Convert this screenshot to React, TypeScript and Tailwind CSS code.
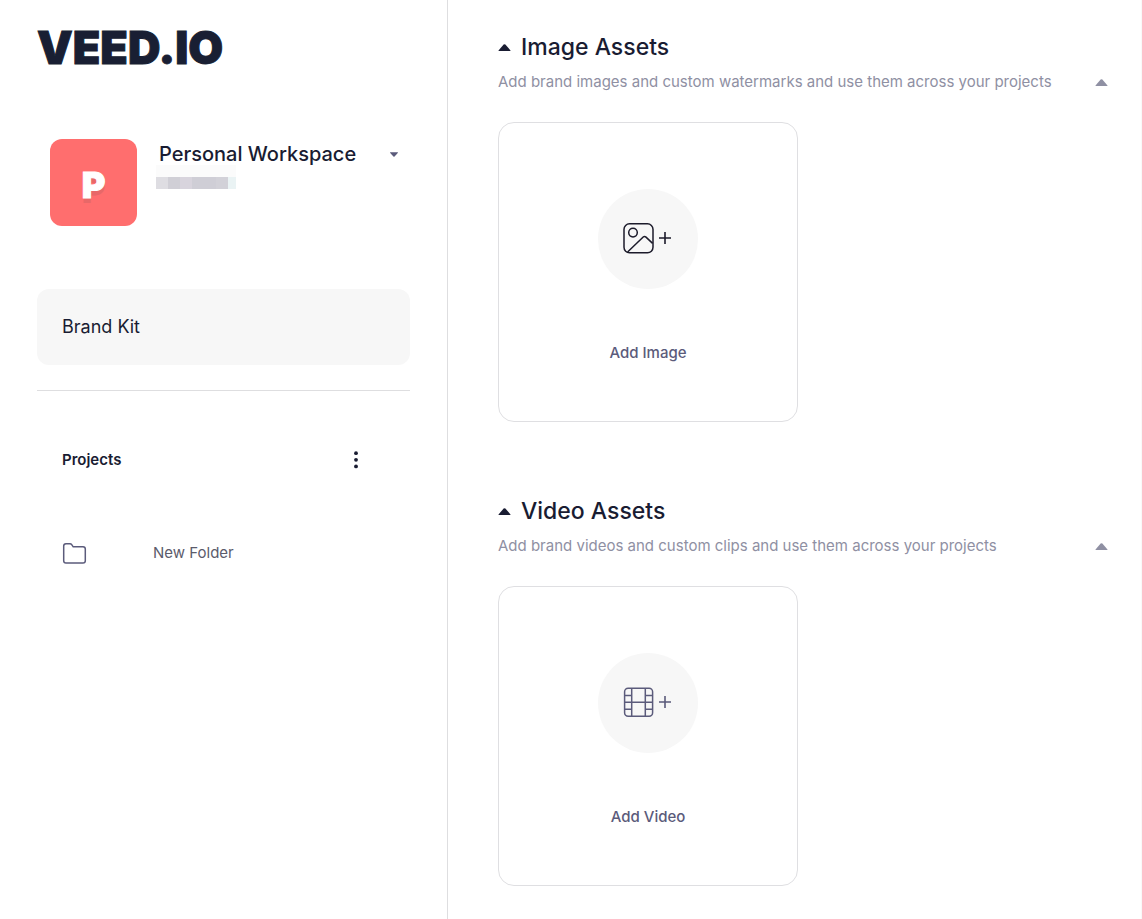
import type { ReactNode } from "react";

type CaretProps = { className: string; up?: boolean };

function Caret({ className, up = false }: CaretProps) {
  return (
    <svg viewBox="0 0 14 8" className={className} fill="currentColor" aria-hidden="true">
      <path d={up ? "M0 8 L0.4 7 L6 0.6 Q7 -0.2 8 0.6 L13.6 7 L14 8Z" : "M0.6 0 H13.4 Q14.4 0.4 13.6 1.4 L8 7.4 Q7 8.2 6 7.4 L0.4 1.4 Q-0.4 0.4 0.6 0Z"} />
    </svg>
  );
}

function ImagePlusIcon() {
  return (
    <svg width="50" height="32" viewBox="0 1 50 32" fill="none" stroke="#1c1b2b" strokeWidth="1.5" aria-hidden="true">
      <rect x="1" y="1.8" width="29" height="29" rx="5.5" />
      <circle cx="10" cy="10.6" r="4.3" />
      <path d="M4.6 30 L20.2 15 Q21.5 13.8 23 15.1 L29.6 21.4" />
      <path d="M36 16 H48 M42 10 V22" strokeWidth="1.6" />
    </svg>
  );
}

function VideoPlusIcon() {
  return (
    <svg width="50" height="32" viewBox="0 1 50 32" fill="none" stroke="#5b5b7b" strokeWidth="1.5" aria-hidden="true">
      <rect x="1.6" y="2.2" width="28" height="28" rx="3.5" />
      <path d="M8.7 2 V30 M22.3 2 V30 M2 16.2 H30 M2 9.6 H9 M2 23.2 H9 M22.3 9.6 H30 M22.3 23.2 H30" />
      <path d="M36 16 H48 M42 10 V22" strokeWidth="1.6" />
    </svg>
  );
}

type AssetSectionProps = {
  title: string;
  description: string;
  action: string;
  icon: ReactNode;
};

function AssetSection({ title, description, action, icon }: AssetSectionProps) {
  return (
    <section>
      <h2 className="flex items-center gap-2.5 text-[23px] leading-8 font-medium text-[#191c32]">
        <Caret up className="h-[7px] w-[13px]" />
        {title}
      </h2>
      <div className="mt-[7px] flex items-center justify-between">
        <p className="text-[15px] leading-6 text-[#8f90a3]">{description}</p>
        <button type="button" aria-label={`Collapse ${title}`} className="text-[#8f90a3]">
          <Caret up className="h-[7px] w-[13px]" />
        </button>
      </div>
      <button
        type="button"
        className="mt-7 flex h-[300px] w-[300px] flex-col items-center rounded-2xl border border-[#dfdfe2] pt-[66px] hover:bg-gray-50"
      >
        <span className="flex h-[100px] w-[100px] items-center justify-center rounded-full bg-[#f7f7f7]">{icon}</span>
        <span className="mt-13 text-[15px] leading-6 font-medium text-[#5b5b7b]">{action}</span>
      </button>
    </section>
  );
}

function Sidebar() {
  return (
    <aside className="w-[448px] shrink-0 border-r border-[#dedee0] px-[37px] pt-7">
      <a href="#" className="block text-[45px] leading-10 font-black text-[#191f33] [-webkit-text-stroke:1px_#191f33]">
        VEED.IO
      </a>

      <div className="mt-[71px] flex gap-[19px] pl-[13px]">
        <div className="flex h-[87px] w-[87px] items-center justify-center rounded-xl bg-[#ff6e6e] pt-1 text-[36px] font-black text-white [-webkit-text-stroke:1px_#ffffff] [text-shadow:0_5px_0_#e86868]">
          P
        </div>
        <div className="flex-1">
          <button type="button" className="flex h-[30px] w-full items-center justify-between pr-3 pl-[3px]">
            <span className="text-xl font-medium text-[#191c32]">Personal Workspace</span>
            <Caret className="h-[5px] w-2 text-[#5b5b7b]" />
          </button>
          {/* hidden plan name */}
          <div className="-mt-1 h-3 w-20 bg-[#fbfbfb]" />
          <div className="flex h-3 w-20">
            <span className="w-3 bg-[#dedde2]" />
            <span className="w-3 bg-[#d0cfd6]" />
            <span className="w-3 bg-[#d8d4dd]" />
            <span className="w-6 bg-[#cfced6]" />
            <span className="w-3 bg-[#d2d1d8]" />
            <span className="w-2 bg-[#eaf3f4]" />
          </div>
        </div>
      </div>

      <nav className="mt-[63px]">
        <a href="#" className="flex h-19 items-center rounded-xl bg-[#f7f7f7] px-[25px] text-lg text-[#191c32]">
          Brand Kit
        </a>
        <hr className="mt-[25px] border-[#dedee0]" />
        <div className="mt-[57px] flex h-6 items-center justify-between pr-[50px] pl-[25px]">
          <h3 className="text-[15px] font-semibold text-[#191c32]">Projects</h3>
          <button type="button" aria-label="Project options">
            <svg width="8" height="18" viewBox="0 0 8 18" fill="#191c32" aria-hidden="true">
              <circle cx="4" cy="2.2" r="1.9" />
              <circle cx="4" cy="8.8" r="1.9" />
              <circle cx="4" cy="15.4" r="1.9" />
            </svg>
          </button>
        </div>
        <a href="#" className="mt-[69px] flex h-6 items-center gap-[66px] pl-[25px] text-[15px] text-[#5b5b6b]">
          <svg width="25" height="22" viewBox="0 0 25 22" fill="none" stroke="#5b5b7b" strokeWidth="1.5" aria-hidden="true">
            <path d="M1.7 18.8 V4 Q1.7 1.7 4 1.7 H8 Q9.1 1.7 9.7 2.6 L11.2 4.8 H21 Q23.3 4.8 23.3 7.1 V18.8 Q23.3 21.1 21 21.1 H4 Q1.7 21.1 1.7 18.8 Z" />
          </svg>
          New Folder
        </a>
      </nav>
    </aside>
  );
}

export default function App() {
  return (
    <div className="flex min-h-screen bg-white font-[Inter,sans-serif]">
      <Sidebar />
      <main className="flex flex-1 flex-col gap-[73px] border-r border-[#f9f9f9] pt-[31px] pr-[33px] pb-[33px] pl-[50px]">
        <AssetSection
          title="Image Assets"
          description="Add brand images and custom watermarks and use them across your projects"
          action="Add Image"
          icon={<ImagePlusIcon />}
        />
        <AssetSection
          title="Video Assets"
          description="Add brand videos and custom clips and use them across your projects"
          action="Add Video"
          icon={<VideoPlusIcon />}
        />
      </main>
    </div>
  );
}
